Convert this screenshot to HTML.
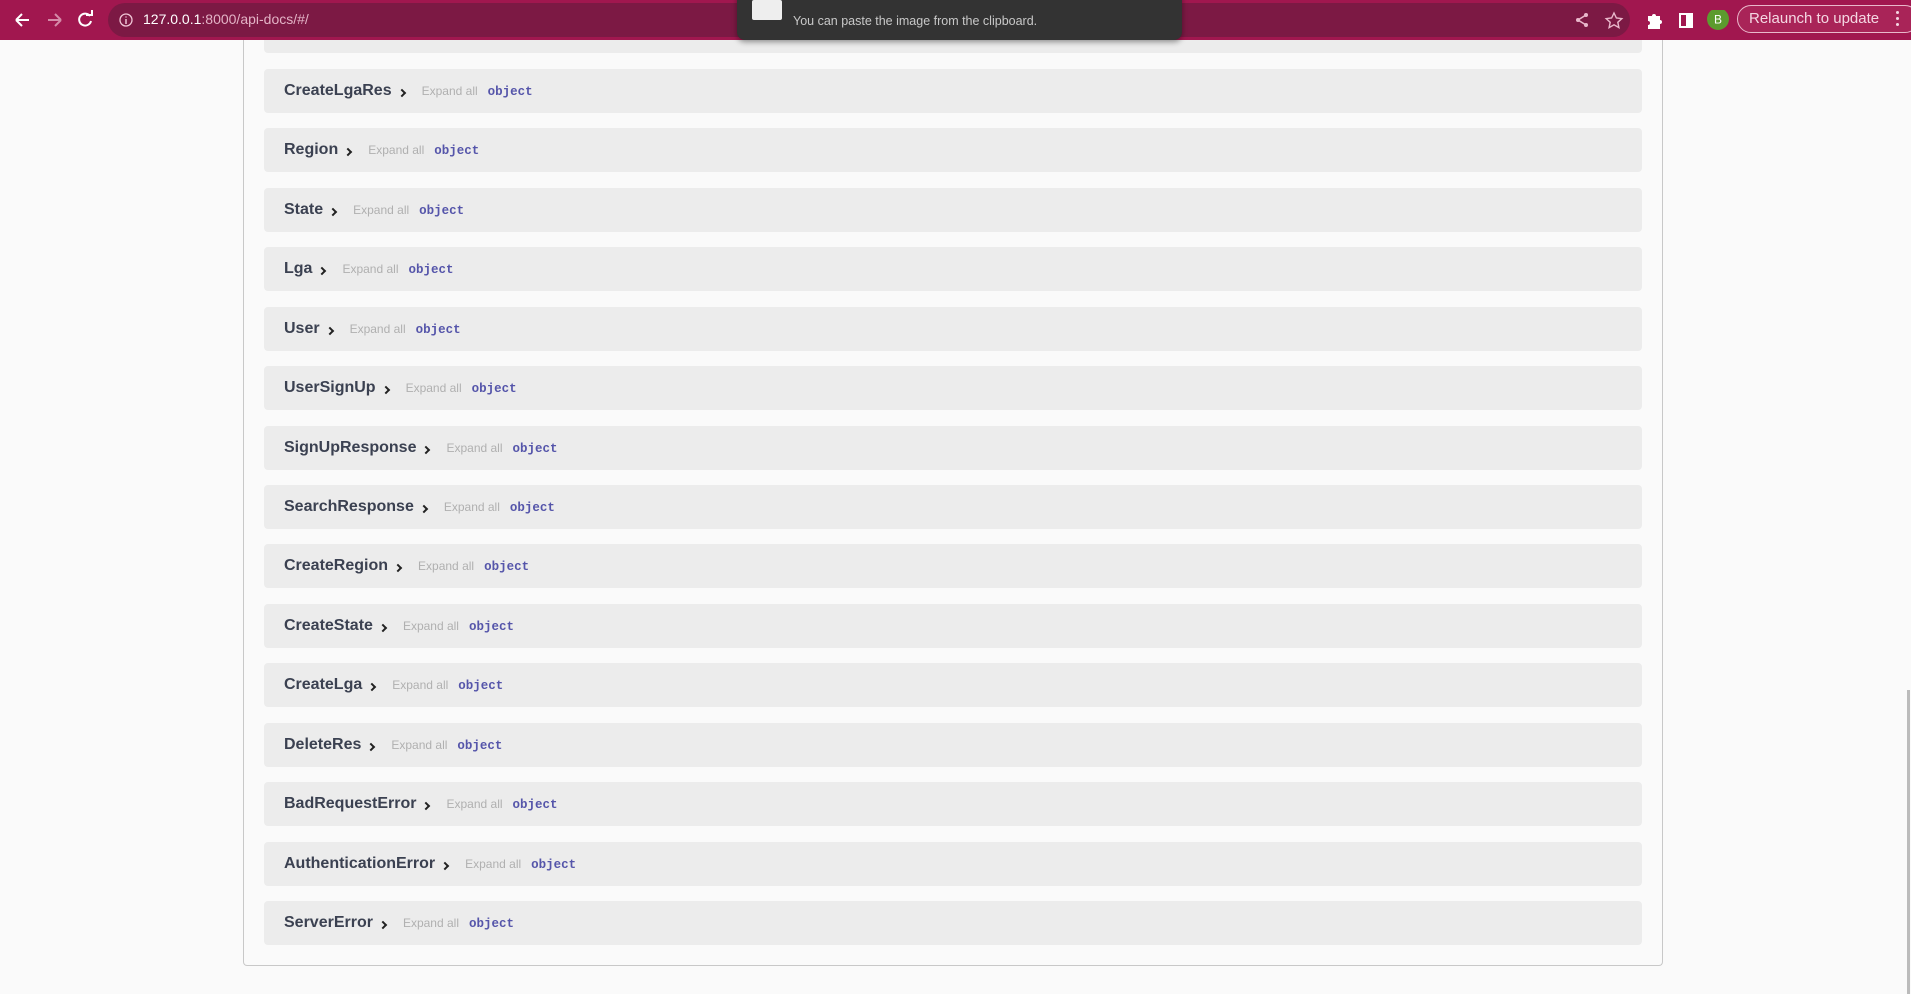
<!DOCTYPE html>
<html><head><style>
body{margin:0;width:1911px;height:994px;overflow:hidden;background:#fafafa;font-family:"Liberation Sans",sans-serif;position:relative}
.bar{position:absolute;left:0;top:0;width:1911px;height:40px;background:#a1174f}
.url{position:absolute;left:108px;top:3px;width:1522px;height:34px;border-radius:17px;background:#7c1944}
.urltxt{position:absolute;left:143px;top:11px;font-size:14px;color:#e3b3c6}
.urltxt b{font-weight:normal;color:#fff}
.cont{position:absolute;left:243px;top:20px;width:1418px;height:945px;border:1px solid #c8c8c8;border-top:none;border-radius:0 0 4px 4px}
.row{position:absolute;left:264px;width:1378px;height:44px;background:#ececec;border-radius:4px}
.row .n{position:absolute;left:20px;top:13px;font-size:16px;font-weight:bold;color:#3b4151;white-space:nowrap}
.row .n span{font-size:12px;font-weight:normal;color:#b0b0b0;margin-left:17px;vertical-align:0px}
.row .n i{font-style:normal;font-family:"Liberation Mono",monospace;font-size:12.5px;font-weight:bold;color:#5555aa;margin-left:10px;vertical-align:0px}
.chev{display:inline-block;width:4px;height:4px;border-right:2px solid #222;border-bottom:2px solid #222;transform:rotate(-45deg);margin-left:7px;vertical-align:-1px}
.pop{position:absolute;left:737px;top:-6px;width:445px;height:46px;background:#333;border-radius:0 0 8px 8px;box-shadow:0 2px 6px rgba(0,0,0,.4)}
</style></head><body>
<div class="cont"></div>
<div class="row" style="top:9px"></div>
<div class="bar"></div>
<div class="url"></div>
<svg style="position:absolute;left:12px;top:10px" width="100" height="20" fill="none" stroke-width="2">
<path d="M4 10h13M4 10l6-6M4 10l6 6" stroke="#fff"/>
<path d="M36 10h13M49 10l-6-6M49 10l-6 6" stroke="#d58aa8"/>
<path d="M78 6a6 6 0 1 0 1 5" stroke="#fff"/><path d="M74 5h6V0" stroke="#fff"/>
</svg>
<svg style="position:absolute;left:118px;top:12px" width="16" height="16"><circle cx="8" cy="8" r="6" fill="none" stroke="#f0c6d6" stroke-width="1.3"/><path d="M8 7v5M8 4.5v1" stroke="#f0c6d6" stroke-width="1.5"/></svg>
<div class="urltxt"><b>127.0.0.1</b>:8000/api-docs/#/</div>
<div class="pop">
<div style="position:absolute;left:15px;top:6px;width:30px;height:20px;background:#eee;border-radius:2px"></div>
<div style="position:absolute;left:56px;top:20px;font-size:12.5px;color:#c8c8c8">You can paste the image from the clipboard.</div>
</div>
<svg style="position:absolute;left:1570px;top:10px" width="170" height="22" fill="none">
<path d="M16 5l-8 5 8 5" stroke="#e9b8cb" stroke-width="1.6"/><circle cx="16" cy="5" r="2" fill="#e9b8cb"/><circle cx="8" cy="10" r="2" fill="#e9b8cb"/><circle cx="16" cy="15" r="2" fill="#e9b8cb"/>
<path d="M44 3l2.4 5 5.4.6-4 3.7 1.1 5.3-4.9-2.8-4.9 2.8 1.1-5.3-4-3.7 5.4-.6z" stroke="#e9b8cb" stroke-width="1.4"/>
<path d="M78 6h4a2 2 0 0 1 4 0h4v4a2 2 0 0 1 0 4v5h-12v-4a2 2 0 0 0 0-4z" fill="#fff"/>
<rect x="110" y="4" width="12" height="13" stroke="#fff" stroke-width="2"/><rect x="116" y="4" width="6" height="13" fill="#fff"/>
<circle cx="148" cy="9" r="11" fill="#5c9b2e"/><text x="148" y="13.5" fill="#fff" font-size="12" text-anchor="middle" font-family="Liberation Sans">B</text>
</svg>
<div style="position:absolute;left:1737px;top:5px;width:182px;height:28px;border:1.5px solid #e9b8cb;border-radius:15px;background:#a92458;box-sizing:border-box"></div>
<div style="position:absolute;left:1749px;top:10px;font-size:15px;color:#f4d7e2">Relaunch to update</div>
<div style="position:absolute;left:1896px;top:11px;width:3px;height:3px;background:#f4d7e2;border-radius:50%;box-shadow:0 6px 0 #f4d7e2,0 12px 0 #f4d7e2"></div>
<div class="row" style="top:69px"><div class="n">CreateLgaRes<b class="chev"></b><span>Expand all</span><i>object</i></div></div>
<div class="row" style="top:128.4px"><div class="n">Region<b class="chev"></b><span>Expand all</span><i>object</i></div></div>
<div class="row" style="top:187.9px"><div class="n">State<b class="chev"></b><span>Expand all</span><i>object</i></div></div>
<div class="row" style="top:247.3px"><div class="n">Lga<b class="chev"></b><span>Expand all</span><i>object</i></div></div>
<div class="row" style="top:306.7px"><div class="n">User<b class="chev"></b><span>Expand all</span><i>object</i></div></div>
<div class="row" style="top:366.1px"><div class="n">UserSignUp<b class="chev"></b><span>Expand all</span><i>object</i></div></div>
<div class="row" style="top:425.6px"><div class="n">SignUpResponse<b class="chev"></b><span>Expand all</span><i>object</i></div></div>
<div class="row" style="top:485px"><div class="n">SearchResponse<b class="chev"></b><span>Expand all</span><i>object</i></div></div>
<div class="row" style="top:544.4px"><div class="n">CreateRegion<b class="chev"></b><span>Expand all</span><i>object</i></div></div>
<div class="row" style="top:603.9px"><div class="n">CreateState<b class="chev"></b><span>Expand all</span><i>object</i></div></div>
<div class="row" style="top:663.3px"><div class="n">CreateLga<b class="chev"></b><span>Expand all</span><i>object</i></div></div>
<div class="row" style="top:722.7px"><div class="n">DeleteRes<b class="chev"></b><span>Expand all</span><i>object</i></div></div>
<div class="row" style="top:782.1px"><div class="n">BadRequestError<b class="chev"></b><span>Expand all</span><i>object</i></div></div>
<div class="row" style="top:841.6px"><div class="n">AuthenticationError<b class="chev"></b><span>Expand all</span><i>object</i></div></div>
<div class="row" style="top:901px"><div class="n">ServerError<b class="chev"></b><span>Expand all</span><i>object</i></div></div>
<div style="position:absolute;left:1907px;top:690px;width:3px;height:304px;background:#bbb"></div>
</body></html>
